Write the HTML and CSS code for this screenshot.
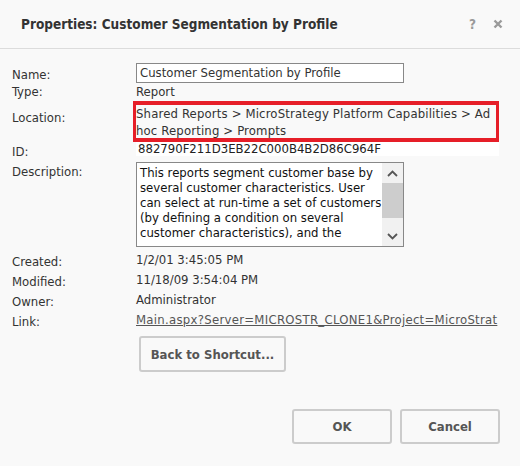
FILE: index.html
```html
<!DOCTYPE html>
<html>
<head>
<meta charset="utf-8">
<link rel="stylesheet" href="styles.css">
</head>
<body>
<div class="dialog">
  <div class="header">
    <div class="title">Properties: Customer Segmentation by Profile</div>
    <div class="tools">
      <span class="help">?</span>
      <svg class="close" width="10" height="10" viewBox="0 0 10 10"><path d="M1.5 1.5 L8.5 8.5 M8.5 1.5 L1.5 8.5" stroke="#9a9a9a" stroke-width="2.4" fill="none"/></svg>
    </div>
  </div>
  <div class="content">
    <div class="row row-name">
      <div class="label">Name:</div>
      <div class="value"><div class="input">Customer Segmentation by Profile</div></div>
    </div>
    <div class="row row-type">
      <div class="label">Type:</div>
      <div class="value">Report</div>
    </div>
    <div class="row row-loc">
      <div class="label">Location:</div>
      <div class="value"><div class="highlight">Shared Reports &gt; MicroStrategy Platform Capabilities &gt; Ad hoc Reporting &gt; Prompts</div></div>
    </div>
    <div class="row row-id">
      <div class="label">ID:</div>
      <div class="value"><div class="idfield">882790F211D3EB22C000B4B2D86C964F</div></div>
    </div>
    <div class="row row-desc">
      <div class="label">Description:</div>
      <div class="value">
        <div class="textarea">
          <div class="tatext">This reports segment customer base by several customer characteristics. User can select at run-time a set of customers (by defining a condition on several customer characteristics), and the</div>
          <div class="scrollbar">
            <div class="arrow up"><svg width="11" height="7" viewBox="0 0 11 7"><path d="M1 6 L5.5 1.5 L10 6" fill="none" stroke="#555" stroke-width="1.8"/></svg></div>
            <div class="thumb"></div>
            <div class="track"></div>
            <div class="arrow down"><svg width="11" height="7" viewBox="0 0 11 7"><path d="M1 1 L5.5 5.5 L10 1" fill="none" stroke="#555" stroke-width="1.8"/></svg></div>
          </div>
        </div>
      </div>
    </div>
    <div class="meta">
      <div class="row row-meta">
        <div class="label">Created:</div>
        <div class="value">1/2/01 3:45:05 PM</div>
      </div>
      <div class="row row-meta">
        <div class="label">Modified:</div>
        <div class="value">11/18/09 3:54:04 PM</div>
      </div>
      <div class="row row-meta">
        <div class="label">Owner:</div>
        <div class="value">Administrator</div>
      </div>
      <div class="row row-meta">
        <div class="label">Link:</div>
        <div class="value"><a class="link">Main.aspx?Server=MICROSTR_CLONE1&amp;Project=MicroStrat</a></div>
      </div>
    </div>
    <div class="shortcut-row">
      <button class="btn btn-shortcut">Back to Shortcut...</button>
    </div>
  </div>
  <div class="footer">
    <button class="btn btn-foot">OK</button>
    <button class="btn btn-foot">Cancel</button>
  </div>
</div>
</body>
</html>
```

FILE: styles.css
```css
html, body {
  margin: 0;
  padding: 0;
  background: #f9f9f9;
}
body {
  font-family: "DejaVu Sans Condensed", "DejaVu Sans", sans-serif;
  font-size: 13px;
  color: #333;
}
.dialog {
  width: 520px;
  height: 466px;
  box-sizing: border-box;
  display: flex;
  flex-direction: column;
}
.header {
  height: 48px;
  border-bottom: 1px solid #dcdcdc;
  display: flex;
  align-items: center;
  justify-content: space-between;
  padding: 0 17px 0 21px;
}
.title {
  font-weight: bold;
  font-size: 13.5px;
  color: #333;
}
.tools {
  display: flex;
  align-items: center;
  gap: 17px;
  color: #9a9a9a;
  font-weight: bold;
  font-size: 13.5px;
}
.content {
  padding: 14px 0 0 12px;
}
.row {
  display: flex;
}
.label {
  width: 124px;
  flex: none;
}
.value {
  flex: 1;
  min-width: 0;
}
.row-name { height: 20px; }
.row-name .label { padding-top: 4px; }
.input {
  width: 268px;
  height: 20px;
  box-sizing: border-box;
  border: 1px solid #888;
  background: #fff;
  padding: 0 3px;
  line-height: 18px;
}
.row-type { height: 18px; line-height: 18px; }
.row-loc { height: 41px; }
.row-loc .label { padding-top: 9px; }
.highlight {
  margin-left: -3px;
  width: 366px;
  height: 41px;
  box-sizing: border-box;
  border-style: solid;
  border-color: #e61e28;
  border-width: 4px 3px;
  line-height: 17px;
  letter-spacing: 0.15px;
  padding: 0;
}
.row-id { height: 14px; }
.row-id .label { padding-top: 2px; }
.idfield {
  width: 363px;
  height: 14px;
  background: #fff;
  line-height: 13px;
  padding-left: 2px;
  color: #222;
  box-sizing: border-box;
}
.row-desc { margin-top: 6px; height: 85px; }
.row-desc .label { padding-top: 2px; }
.textarea {
  width: 268px;
  height: 85px;
  box-sizing: border-box;
  border: 1px solid #888;
  background: #fff;
  display: flex;
  overflow: hidden;
}
.tatext {
  flex: 1;
  padding: 2px 0 0 3px;
  line-height: 15px;
  color: #111;
}
.scrollbar {
  width: 21px;
  flex: none;
  display: flex;
  flex-direction: column;
  background: #f1f1f1;
}
.arrow {
  height: 20px;
  display: flex;
  align-items: center;
  justify-content: center;
}
.thumb {
  height: 35px;
  background: #cdcdcd;
}
.track { flex: 1; }
.meta { margin-top: 4px; }
.row-meta { height: 20px; }
.row-meta .label { padding-top: 3px; }
.row-meta .value { line-height: 18px; white-space: nowrap; }
.link {
  color: #555;
  text-decoration: underline;
  letter-spacing: 0.28px;
}
.shortcut-row {
  padding: 5px 0 0 127px;
}
.btn {
  font-family: "DejaVu Sans Condensed", "DejaVu Sans", sans-serif;
  font-weight: bold;
  font-size: 13px;
  color: #555;
  background: #f9f9f9;
  border: 2px solid #cccccc;
  border-radius: 3px;
  box-sizing: border-box;
  padding: 0;
}
.btn-shortcut {
  width: 147px;
  height: 36px;
}
.footer {
  margin-top: auto;
  display: flex;
  justify-content: flex-end;
  gap: 8px;
  padding: 0 20px 22px 0;
}
.btn-foot {
  width: 100px;
  height: 35px;
}
```
